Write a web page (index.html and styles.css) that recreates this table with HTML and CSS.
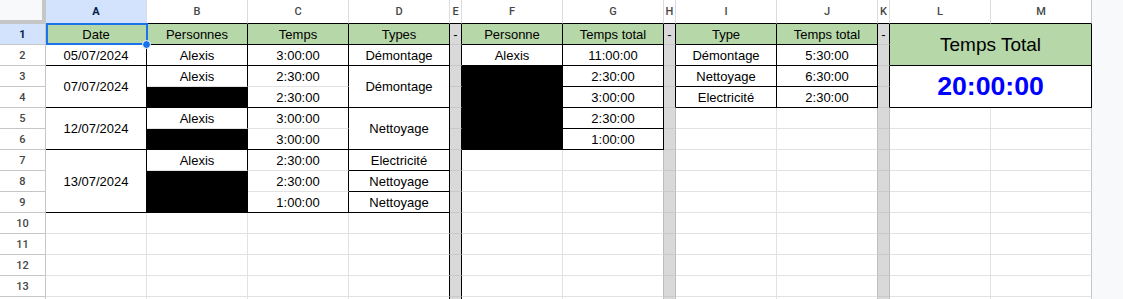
FILE: index.html
```html
<!DOCTYPE html>
<html lang="fr">
<head>
<meta charset="utf-8">
<title>Feuille</title>
<link rel="stylesheet" href="styles.css">
</head>
<body>
<div class="sheet">
  <!-- column headers -->
  <div class="corner"></div>
  <div class="hd bk hsel">A</div>
  <div class="hd bk">B</div>
  <div class="hd bk">C</div>
  <div class="hd bk">D</div>
  <div class="hd bk">E</div>
  <div class="hd bk">F</div>
  <div class="hd bk">G</div>
  <div class="hd bk">H</div>
  <div class="hd bk">I</div>
  <div class="hd bk">J</div>
  <div class="hd bk">K</div>
  <div class="hd bk">L</div>
  <div class="hd bk hm">M</div>

  <!-- row 1 -->
  <div class="rh hsel">1</div>
  <div class="c g rk bk a1">Date<span class="handle"></span></div>
  <div class="c g rk bk">Personnes</div>
  <div class="c g rk bk">Temps</div>
  <div class="c g rk bk">Types</div>
  <div class="c x rk">-</div>
  <div class="c g rk bk">Personne</div>
  <div class="c g rk bk">Temps total</div>
  <div class="c x rk">-</div>
  <div class="c g rk bk">Type</div>
  <div class="c g rk bk">Temps total</div>
  <div class="c x rk">-</div>
  <div class="c g rk bk c2 r2 big">Temps Total</div>

  <!-- row 2 -->
  <div class="rh">2</div>
  <div class="c rk bk">05/07/2024</div>
  <div class="c rk bk">Alexis</div>
  <div class="c rk bk">3:00:00</div>
  <div class="c rk bk">Démontage</div>
  <div class="c x rk"></div>
  <div class="c rk bk">Alexis</div>
  <div class="c rk bk">11:00:00</div>
  <div class="c x rk"></div>
  <div class="c rk bk">Démontage</div>
  <div class="c rk bk">5:30:00</div>
  <div class="c x rk"></div>

  <!-- row 3 -->
  <div class="rh">3</div>
  <div class="c rk bk r2">07/07/2024</div>
  <div class="c rk">Alexis</div>
  <div class="c rk">2:30:00</div>
  <div class="c rk bk r2">Démontage</div>
  <div class="c x rk"></div>
  <div class="c blk rk bk r4"></div>
  <div class="c rk bk">2:30:00</div>
  <div class="c x rk"></div>
  <div class="c rk bk">Nettoyage</div>
  <div class="c rk bk">6:30:00</div>
  <div class="c x rk"></div>
  <div class="c rk bk c2 r2 total">20:00:00</div>

  <!-- row 4 -->
  <div class="rh">4</div>
  <div class="c blk rk bk"></div>
  <div class="c rk bk">2:30:00</div>
  <div class="c x rk"></div>
  <div class="c rk bk">3:00:00</div>
  <div class="c x rk"></div>
  <div class="c rk bk">Electricité</div>
  <div class="c rk bk">2:30:00</div>
  <div class="c x rk"></div>

  <!-- row 5 -->
  <div class="rh">5</div>
  <div class="c rk bk r2">12/07/2024</div>
  <div class="c rk">Alexis</div>
  <div class="c rk">3:00:00</div>
  <div class="c rk bk r2">Nettoyage</div>
  <div class="c x rk"></div>
  <div class="c rk bk">2:30:00</div>
  <div class="c x rg"></div>
  <div class="c"></div>
  <div class="c rg"></div>
  <div class="c x rg"></div>
  <div class="c"></div>
  <div class="c rm"></div>

  <!-- row 6 -->
  <div class="rh">6</div>
  <div class="c blk rk bk"></div>
  <div class="c rk bk">3:00:00</div>
  <div class="c x rk"></div>
  <div class="c rk bk">1:00:00</div>
  <div class="c x rg"></div>
  <div class="c"></div>
  <div class="c rg"></div>
  <div class="c x rg"></div>
  <div class="c"></div>
  <div class="c rm"></div>

  <!-- row 7 -->
  <div class="rh">7</div>
  <div class="c rk bk r3">13/07/2024</div>
  <div class="c rk">Alexis</div>
  <div class="c rk">2:30:00</div>
  <div class="c rk bk">Electricité</div>
  <div class="c x rk"></div>
  <div class="c"></div>
  <div class="c rg"></div>
  <div class="c x rg"></div>
  <div class="c"></div>
  <div class="c rg"></div>
  <div class="c x rg"></div>
  <div class="c"></div>
  <div class="c rm"></div>

  <!-- row 8 -->
  <div class="rh">8</div>
  <div class="c blk rk bk r2"></div>
  <div class="c rk">2:30:00</div>
  <div class="c rk bk">Nettoyage</div>
  <div class="c x rk"></div>
  <div class="c"></div>
  <div class="c rg"></div>
  <div class="c x rg"></div>
  <div class="c"></div>
  <div class="c rg"></div>
  <div class="c x rg"></div>
  <div class="c"></div>
  <div class="c rm"></div>

  <!-- row 9 -->
  <div class="rh">9</div>
  <div class="c rk bk">1:00:00</div>
  <div class="c rk bk">Nettoyage</div>
  <div class="c x rk"></div>
  <div class="c"></div>
  <div class="c rg"></div>
  <div class="c x rg"></div>
  <div class="c"></div>
  <div class="c rg"></div>
  <div class="c x rg"></div>
  <div class="c"></div>
  <div class="c rm"></div>

  <!-- row 10 -->
  <div class="rh">10</div>
  <div class="c"></div><div class="c"></div><div class="c"></div>
  <div class="c rk"></div>
  <div class="c x rk"></div>
  <div class="c"></div>
  <div class="c rg"></div>
  <div class="c x rg"></div>
  <div class="c"></div>
  <div class="c rg"></div>
  <div class="c x rg"></div>
  <div class="c"></div>
  <div class="c rm"></div>

  <!-- row 11 -->
  <div class="rh">11</div>
  <div class="c"></div><div class="c"></div><div class="c"></div>
  <div class="c rk"></div>
  <div class="c x rk"></div>
  <div class="c"></div>
  <div class="c rg"></div>
  <div class="c x rg"></div>
  <div class="c"></div>
  <div class="c rg"></div>
  <div class="c x rg"></div>
  <div class="c"></div>
  <div class="c rm"></div>

  <!-- row 12 -->
  <div class="rh">12</div>
  <div class="c"></div><div class="c"></div><div class="c"></div>
  <div class="c rk"></div>
  <div class="c x rk"></div>
  <div class="c"></div>
  <div class="c rg"></div>
  <div class="c x rg"></div>
  <div class="c"></div>
  <div class="c rg"></div>
  <div class="c x rg"></div>
  <div class="c"></div>
  <div class="c rm"></div>

  <!-- row 13 -->
  <div class="rh">13</div>
  <div class="c"></div><div class="c"></div><div class="c"></div>
  <div class="c rk"></div>
  <div class="c x rk"></div>
  <div class="c"></div>
  <div class="c rg"></div>
  <div class="c x rg"></div>
  <div class="c"></div>
  <div class="c rg"></div>
  <div class="c x rg"></div>
  <div class="c"></div>
  <div class="c rm"></div>

  <!-- row 14 (only its top edge is visible) -->
  <div class="rh"></div>
  <div class="c"></div><div class="c"></div><div class="c"></div>
  <div class="c rk"></div>
  <div class="c x rk"></div>
  <div class="c"></div>
  <div class="c rg"></div>
  <div class="c x rg"></div>
  <div class="c"></div>
  <div class="c rg"></div>
  <div class="c x rg"></div>
  <div class="c"></div>
  <div class="c rm"></div>
</div>
</body>
</html>
```

FILE: styles.css
```css
* {
  box-sizing: border-box;
}

html, body {
  margin: 0;
  padding: 0;
  background: #f8f9fa;
  overflow: hidden;
}

.sheet {
  display: grid;
  grid-template-columns: 46px 101px 101px 101px 101px 12px 101px 101px 12px 101px 101px 12px 101px 101px;
  grid-template-rows: 24px repeat(14, 21px);
  width: 1123px;
  height: 299px;
  overflow: hidden;
  background: #f8f9fa;
  font-family: "Liberation Sans", Arial, sans-serif;
}

.corner {
  background: #f8f9fa;
  border-right: 4px solid #c4c7c5;
  border-bottom: 4px solid #c4c7c5;
}

.hd {
  background: #fff;
  border-right: 1px solid #dadce0;
  border-bottom: 1px solid #c4c7c5;
  display: flex;
  align-items: center;
  justify-content: center;
  font-family: Roboto, "Liberation Sans", sans-serif;
  font-size: 11px;
  font-weight: 500;
  color: #444746;
}

.hm {
  border-right-color: #c4c7c5;
}

.rh {
  background: #fff;
  border-right: 1px solid #c4c7c5;
  border-bottom: 1px solid #c4c7c5;
  display: flex;
  align-items: center;
  justify-content: center;
  font-family: Roboto, "Liberation Sans", sans-serif;
  font-size: 11px;
  font-weight: 500;
  color: #444746;
}

.hsel {
  background: #d3e3fd;
  color: #041e49;
  font-weight: 700;
}

.c {
  background: #fff;
  border-right: 1px solid #e2e2e2;
  border-bottom: 1px solid #e2e2e2;
  display: flex;
  align-items: center;
  justify-content: center;
  font-size: 13px;
  color: #000;
  white-space: nowrap;
  overflow: hidden;
}

.g {
  background: #b6d7a8;
}

.x {
  background: #d9d9d9;
  border-bottom-color: #c9c9c9;
}

.blk {
  background: #000;
}

.rk {
  border-right-color: #000;
}

.bk {
  border-bottom-color: #000;
}

.rg {
  border-right-color: #bdbdbd;
}

.rm {
  border-right-color: #c4c7c5;
}

.c2 {
  grid-column: span 2;
}

.r2 {
  grid-row: span 2;
}

.r3 {
  grid-row: span 3;
}

.r4 {
  grid-row: span 4;
}

.big {
  font-size: 19px;
}

.total {
  font-size: 26.67px;
  font-weight: 700;
  color: #0000ff;
}

.a1 {
  position: relative;
  overflow: visible;
  z-index: 2;
}

.a1::after {
  content: "";
  position: absolute;
  top: -1px;
  left: 0;
  right: -2px;
  bottom: -1px;
  border: 2px solid #1a73e8;
  pointer-events: none;
}

.handle {
  position: absolute;
  right: -5px;
  bottom: -5px;
  width: 9px;
  height: 9px;
  border-radius: 50%;
  background: #1a73e8;
  border: 1px solid #fff;
  z-index: 3;
}
```
